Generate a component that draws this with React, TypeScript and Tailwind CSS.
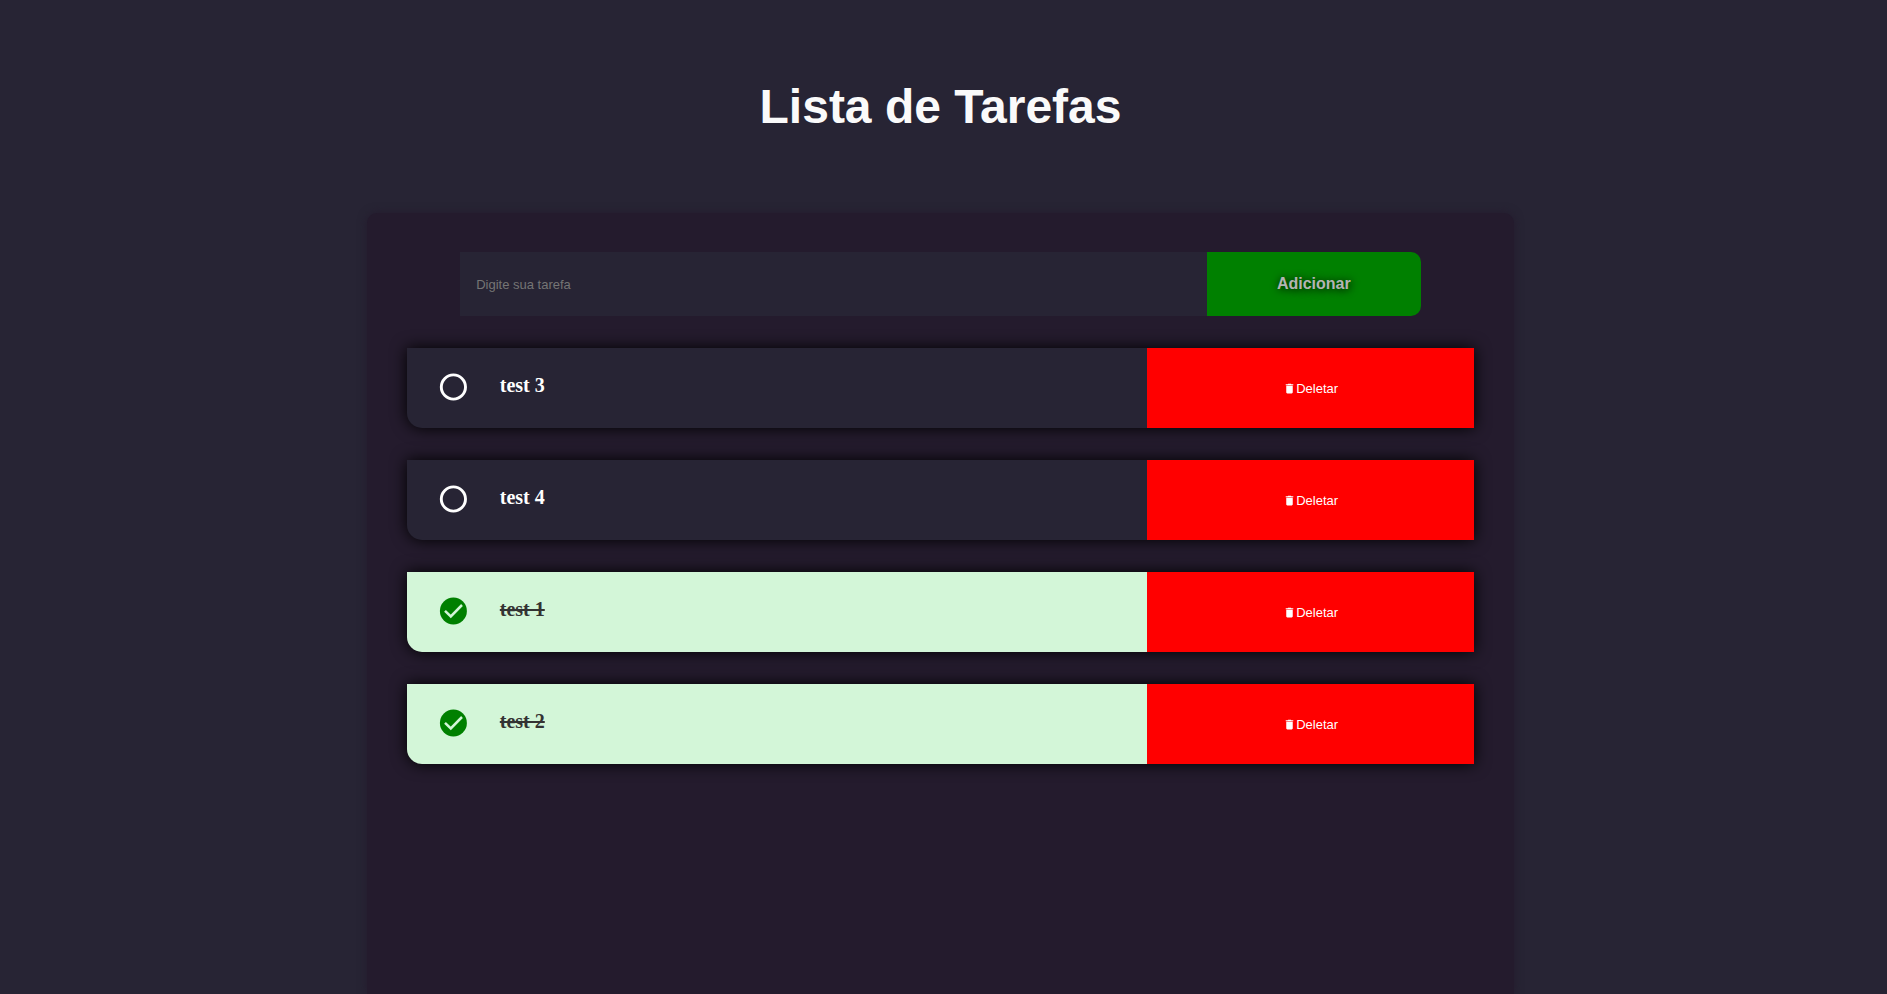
import { useState, type FormEvent } from "react";
import { MdDelete } from "react-icons/md";

type Task = { id: number; title: string; done: boolean };

const initialTasks: Task[] = [
  { id: 3, title: "test 3", done: false },
  { id: 4, title: "test 4", done: false },
  { id: 1, title: "test 1", done: true },
  { id: 2, title: "test 2", done: true },
];

function StatusIcon({ done }: { done: boolean }) {
  return (
    <svg width="32" height="32" viewBox="0 0 32 32" fill="none" aria-hidden="true">
      {done ? (
        <>
          <circle cx="16.4" cy="16" r="13.5" fill="currentColor" />
          <path d="M8 15.8 13.8 21.4 25 10" stroke="#d3f6d8" strokeWidth="2.5" />
        </>
      ) : (
        <circle cx="16.4" cy="16" r="12.1" stroke="currentColor" strokeWidth="2.9" />
      )}
    </svg>
  );
}

type TaskItemProps = { task: Task; onToggle: () => void; onDelete: () => void };

function TaskItem({ task, onToggle, onDelete }: TaskItemProps) {
  return (
    <li
      className={`flex h-20 rounded-bl-[15px] shadow-[0_0_16px_#000000] ${
        task.done ? "bg-[#d3f6d8]" : "bg-[#272434]"
      }`}
    >
      <div className="flex min-w-0 flex-1 items-center pb-[3px] pl-[30px]">
        <button
          type="button"
          onClick={onToggle}
          aria-pressed={task.done}
          aria-label={task.title}
          className={`shrink-0 cursor-pointer ${task.done ? "text-[#008000]" : "text-white"}`}
        >
          <StatusIcon done={task.done} />
        </button>
        <span
          className={`truncate pb-[3px] pl-[31px] font-['Liberation_Serif',serif] text-xl leading-6 font-bold ${
            task.done ? "text-[#333333] line-through" : "text-white"
          }`}
        >
          {task.title}
        </span>
      </div>
      <button
        type="button"
        onClick={onDelete}
        className="flex w-[327px] shrink-0 cursor-pointer items-center justify-center bg-[#ff0000] text-[13px] leading-4 text-white"
      >
        <MdDelete size={13} />
        <span className="pt-0.5">Deletar</span>
      </button>
    </li>
  );
}

export default function App() {
  const [tasks, setTasks] = useState<Task[]>(initialTasks);
  const [title, setTitle] = useState("");

  const addTask = (event: FormEvent) => {
    event.preventDefault();
    if (!title.trim()) return;
    setTasks([{ id: Date.now(), title: title.trim(), done: false }, ...tasks]);
    setTitle("");
  };

  const toggleTask = (id: number) =>
    setTasks(tasks.map((task) => (task.id === id ? { ...task, done: !task.done } : task)));

  return (
    <div className="flex min-h-screen flex-col items-center bg-[#272434] pr-1.5 font-['Liberation_Sans',Arial,sans-serif]">
      <h1 className="pt-20 pb-[79px] text-5xl leading-[54px] font-bold text-[#fafafa]">Lista de Tarefas</h1>
      <main className="w-[61%] flex-1 rounded-t-[10px] bg-[#241b2d] px-10 pt-[39px] shadow-[0_0_10px_#241b2d]">
        <form onSubmit={addTask} className="mx-auto flex h-16 w-[90%]">
          <input
            type="text"
            aria-label="Digite sua tarefa"
            placeholder="Digite sua tarefa"
            value={title}
            onChange={(event) => setTitle(event.target.value)}
            className="min-w-0 flex-1 bg-[#272434] px-4 pt-0.5 text-[13px] text-white outline-none placeholder:text-[#757575]"
          />
          <button
            type="submit"
            className="w-[214px] shrink-0 cursor-pointer rounded-r-[10px] bg-[#008000] text-base font-bold text-[#b4b4b4] [text-shadow:1px_1px_8px_#000000]"
          >
            Adicionar
          </button>
        </form>
        <ul className="mt-8 flex flex-col gap-8">
          {tasks.map((task) => (
            <TaskItem
              key={task.id}
              task={task}
              onToggle={() => toggleTask(task.id)}
              onDelete={() => setTasks(tasks.filter((other) => other.id !== task.id))}
            />
          ))}
        </ul>
      </main>
    </div>
  );
}
